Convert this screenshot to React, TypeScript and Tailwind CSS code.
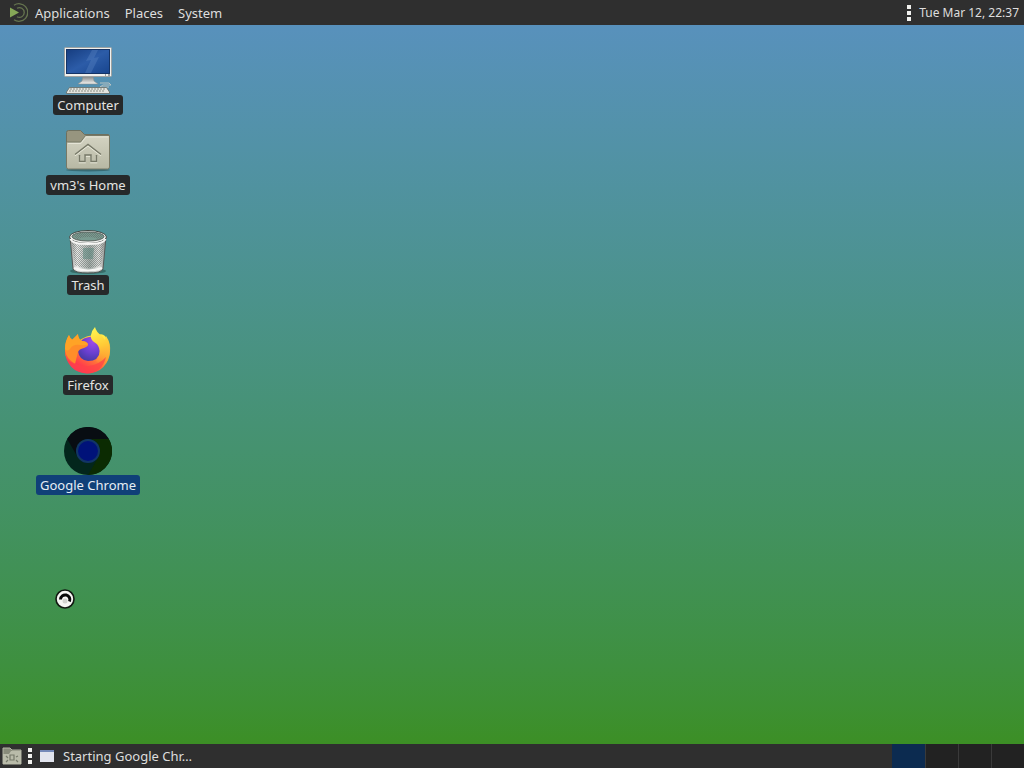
import type { ReactNode } from 'react';

function ComputerIcon() {
  return (
    <svg viewBox="0 0 48 48" className="size-12" aria-hidden="true">
      <defs>
        <linearGradient id="screen" x1="0" y1="0" x2="1" y2="1">
          <stop offset="0" stopColor="#163d80" />
          <stop offset=".5" stopColor="#2c5ca8" />
          <stop offset="1" stopColor="#18458e" />
        </linearGradient>
        <linearGradient id="stand" x1="0" y1="0" x2="0" y2="1">
          <stop offset="0" stopColor="#777b7c" />
          <stop offset="1" stopColor="#f4f4f2" />
        </linearGradient>
      </defs>
      <path d="M19 29h10l1 5 4 3H14l4-3z" fill="url(#stand)" stroke="#8a8e8c" strokeWidth=".6" />
      <path d="M36 36h9l2 2h-8l-3 2h9" fill="none" stroke="#b9c3c2" strokeWidth="1" />
      <rect x=".5" y=".5" width="47" height="29" rx="1" fill="#f0f0ed" stroke="#9da2a2" />
      <rect x="2.500" y="2.500" width="43" height="24" fill="url(#screen)" stroke="#143365" />
      <path d="M28 3 22 14l5-1-6 13h6l8-16-5 1 4-8z" fill="#5882c1" opacity=".4" />
      <path d="M41 28h1M44 28h2" stroke="#42515b" />
      <path d="M5.500 40.500h37l3 4.500v1.500h-43V45z" fill="#e4e4de" stroke="#656b65" strokeWidth=".8" />
      <path d="M6 42h36M5 44h36" stroke="#8a9086" strokeWidth="1" strokeDasharray="2 1" />
    </svg>
  );
}

function HomeIcon() {
  return (
    <svg viewBox="0 0 48 48" className="size-12" aria-hidden="true">
      <defs>
        <linearGradient id="folder" x1="0" y1="0" x2="0" y2="1">
          <stop offset="0" stopColor="#d3d3c2" />
          <stop offset="1" stopColor="#b7b8a4" />
        </linearGradient>
      </defs>
      <ellipse cx="24" cy="43" rx="22" ry="1.500" fill="#1f4445" opacity=".5" />
      <path d="M2.500 40V5.500q0-2 2-2h12l4 4H44q1.500 0 1.500 2V40z" fill="#97957f" stroke="#6e705f" />
      <path d="M2.500 15h14l5-6.500h24V40q0 2-2 2h-39q-2 0-2-2z" fill="url(#folder)" stroke="#777966" />
      <path d="M4 16.500h13l5-6.500h22" fill="none" stroke="#e4e4d6" />
      <path d="m11 28.500 13-10 13 10M15.500 29v6.500h5.500V29h6v6.500h5.500V29" fill="none" stroke="#f0f0e1" strokeWidth="1.500" />
      <path d="m11 27.500 13-10 13 10M15.500 28v6.500h5.500V28h6v6.500h5.500V28" fill="none" stroke="#767867" strokeWidth="1.500" />
    </svg>
  );
}

function TrashIcon() {
  return (
    <svg viewBox="0 0 48 48" className="size-12" aria-hidden="true">
      <defs>
        <linearGradient id="bin">
          <stop offset="0" stopColor="#969997" />
          <stop offset=".2" stopColor="#ecedeb" />
          <stop offset=".55" stopColor="#a4aeaa" />
          <stop offset=".8" stopColor="#e1e2df" />
          <stop offset="1" stopColor="#858987" />
        </linearGradient>
        <pattern id="mesh" width="2" height="2" patternUnits="userSpaceOnUse">
          <path d="M0 0h1v1H0zM1 1h1v1H1z" fill="#59615e" opacity=".5" />
        </pattern>
      </defs>
      <ellipse cx="24" cy="44" rx="18" ry="3" fill="#18312c" opacity=".4" />
      <path d="m6 10 3 32q2 4 15 4t15-4l3-32z" fill="url(#bin)" stroke="#545957" />
      <path d="m8 16 3 22q5 3 13 3t13-3l3-22q-16 5-32 0z" fill="url(#mesh)" />
      <path d="M19 21h11l-1 11H19z" fill="#58857b" opacity=".5" />
      <ellipse cx="24" cy="10" rx="18.500" ry="6.500" fill="#eff0ee" stroke="#3f4743" />
      <ellipse cx="24" cy="9.500" rx="16" ry="4.500" fill="#799b91" stroke="#59635e" />
      <path d="M9 9q15-8 30 0l-4 3q-11-4-22 0z" fill="url(#mesh)" />
      <path d="M6.500 12q2 5 17.500 5t17.500-5M10 41q14 5 28 0" fill="none" stroke="#f7f7f5" strokeWidth="2" />
    </svg>
  );
}

function FirefoxIcon() {
  return (
    <svg viewBox="0 0 48 48" className="size-12" aria-hidden="true">
      <defs>
        <linearGradient id="flame" x1=".85" y1=".1" x2=".2" y2=".95">
          <stop offset="0" stopColor="#ffe847" />
          <stop offset=".3" stopColor="#ffb52f" />
          <stop offset=".55" stopColor="#ff7139" />
          <stop offset=".78" stopColor="#ff3f4b" />
          <stop offset="1" stopColor="#ed2377" />
        </linearGradient>
        <radialGradient id="globe" cx=".65" cy=".2" r=".8">
          <stop offset="0" stopColor="#a04be8" />
          <stop offset=".6" stopColor="#6a3fd0" />
          <stop offset="1" stopColor="#4a3aa8" />
        </radialGradient>
        <linearGradient id="tail" x1=".4" y1="0" x2=".6" y2="1">
          <stop offset="0" stopColor="#fff44f" />
          <stop offset=".5" stopColor="#ffc936" />
          <stop offset="1" stopColor="#ff7a37" stopOpacity="0" />
        </linearGradient>
      </defs>
      <path d="M5 9q-4 6-4 15a22.500 22.500 0 0 0 45 0q0-9-5-15-3-3-7-1-10-1-20 6-6 0-9-5z" fill="url(#flame)" />
      <path d="M17 14q2-3 8-4 7-1 12 5-3-1-5-1 4 4 4 10-1 10-12 10-9-1-10-10 0-6 3-10z" fill="url(#globe)" />
      <path d="M31 0q1 5 7 9l3 4 1-4q5 7 4 16-1 9-7 14l-7-5q5-6 3-13-1-4-5-6-4-3-3-7 1-5 4-8z" fill="url(#tail)" />
      <path d="M5 8q1 4 3 5 3-3 6-6 0 5 4 7 4 0 6 3 1 2-4 4-5 1-6 4l-3 12Q1 34 1 24q0-10 4-16z" fill="#ff8d29" />
      <path d="M5 8q1 4 3 5 3-3 6-6 0 5 4 7 4 0 6 3-3 2-8 1-7-1-10 4-3 3-5 0 0-8 4-14z" fill="#ffa326" />
      <path d="M1 24q2 8 9 12 7 4 15 3 11-2 17-9-4 16-19 16.500Q3 45 1 24z" fill="#ff4148" opacity=".75" />
    </svg>
  );
}

function ChromeIcon() {
  return (
    <svg viewBox="0 0 48 48" className="size-12" aria-hidden="true">
      <circle cx="24" cy="24" r="24" fill="#03261c" />
      <path d="M3.200 12A24 24 0 0 1 44.800 12H24a12 12 0 0 0-10.400 18z" fill="#080d12" />
      <path d="M44.800 12A24 24 0 0 1 24 48l10.400-18A12 12 0 0 0 24 12z" fill="#0b2b02" />
      <circle cx="24" cy="24" r="12" fill="#123565" />
      <circle cx="24" cy="24" r="10" fill="#001279" />
    </svg>
  );
}

function MateLogo() {
  return (
    <svg viewBox="0 0 20 20" className="size-5" fill="none" aria-hidden="true">
      <path d="M6 2.200A8.800 8.800 0 1 1 6 16.800" stroke="#65744f" strokeWidth="1.300" />
      <path d="M9 5.200a4.900 4.900 0 1 1 0 8.600" stroke="#65744f" strokeWidth="1.300" />
      <path d="M2 4.500v10l9-5z" fill="#86a757" />
    </svg>
  );
}

function FolderButtonIcon() {
  return (
    <svg viewBox="0 0 20 18" className="h-5 w-5" aria-hidden="true">
      <path d="M1 1h7l2 2h9v14H1z" fill="#888b7a" stroke="#b3b5a4" />
      <path d="M1 7h6l2-3h10v13H1z" fill="#b9bba9" />
      <path d="M8 8h4v5H8zM4 9l2 2m8-1 2-1M4 15l2-2m8 0 2 2" fill="none" stroke="#757969" strokeWidth="1.200" />
    </svg>
  );
}

function Grip() {
  return (
    <span className="flex flex-col gap-0.5" aria-hidden="true">
      <i className="size-1 bg-[#f1f1ee]" />
      <i className="size-1 bg-[#f1f1ee]" />
      <i className="size-1 bg-[#f1f1ee]" />
    </span>
  );
}

function DesktopItem({ label, icon, selected = false }: { label: string; icon: ReactNode; selected?: boolean }) {
  return (
    <li>
      <button type="button" className="flex flex-col items-center">
        {icon}
        <span className={`rounded-[3px] px-1 text-[13px] leading-5 ${selected ? 'bg-[#104078] text-[#e6edf4]' : 'bg-[#26292a] text-[#e4e4e1]'}`}>
          {label}
        </span>
      </button>
    </li>
  );
}

export default function App() {
  return (
    <div className="flex min-h-screen flex-col font-['Noto_Sans',sans-serif] text-[13px] leading-5 text-[#dedede]">
      <header className="flex h-[25px] items-center bg-[#2f2f2f] pr-1 pl-2">
        <nav className="flex items-center gap-[15px]" aria-label="Desktop menu">
          <button type="button" className="flex items-center gap-[7px]">
            <MateLogo />
            Applications
          </button>
          <button type="button">Places</button>
          <button type="button">System</button>
        </nav>
        <div className="ml-auto flex items-center gap-2">
          <Grip />
          <time dateTime="2024-03-12T22:37" className="pr-px text-xs leading-5">
            Tue Mar 12, 22:37
          </time>
        </div>
      </header>

      <main className="relative flex-1 bg-linear-to-b from-[#5891bc] to-[#3c8f25] pt-[22px]">
        <ul className="flex w-44 flex-col items-center gap-8">
          <li>
            <ul className="flex flex-col items-center gap-3">
              <DesktopItem label="Computer" icon={<ComputerIcon />} />
              <DesktopItem label="vm3's Home" icon={<HomeIcon />} />
            </ul>
          </li>
          <DesktopItem label="Trash" icon={<TrashIcon />} />
          <DesktopItem label="Firefox" icon={<FirefoxIcon />} />
          <DesktopItem label="Google Chrome" icon={<ChromeIcon />} selected />
        </ul>
        <svg viewBox="0 0 20 20" className="absolute top-[564px] left-[55px] size-5" role="img" aria-label="Busy">
          <circle cx="10" cy="10" r="9" fill="#f6f6f3" stroke="#111811" strokeWidth="1.600" />
          <path d="M5.500 10.500a4.700 4.700 0 1 1 9 2" fill="none" stroke="#080908" strokeWidth="3" />
          <circle cx="10" cy="12" r="2.500" fill="#d2d3cf" />
        </svg>
      </main>

      <footer className="flex h-6 items-center bg-[#2f2f2f]">
        <button type="button" aria-label="Show desktop" className="mx-0.5">
          <FolderButtonIcon />
        </button>
        <span className="ml-1">
          <Grip />
        </span>
        <button type="button" className="ml-2 flex items-center gap-[9px]">
          <svg viewBox="0 0 14 12" className="h-3 w-3.5" aria-hidden="true">
            <path d="M0 0h14v12H0z" fill="#e1e4ed" />
            <path d="M0 0h14v2H0z" fill="#7489b8" />
          </svg>
          Starting Google Chr…
        </button>
        <div className="ml-auto flex h-full gap-px bg-[#3a3a3a]" aria-label="Workspaces">
          <button type="button" aria-label="Workspace 1" className="w-[33px] bg-[#0c2b50]" />
          <button type="button" aria-label="Workspace 2" className="w-8 bg-[#222222]" />
          <button type="button" aria-label="Workspace 3" className="w-8 bg-[#222222]" />
          <button type="button" aria-label="Workspace 4" className="w-8 bg-[#222222]" />
        </div>
      </footer>
    </div>
  );
}
